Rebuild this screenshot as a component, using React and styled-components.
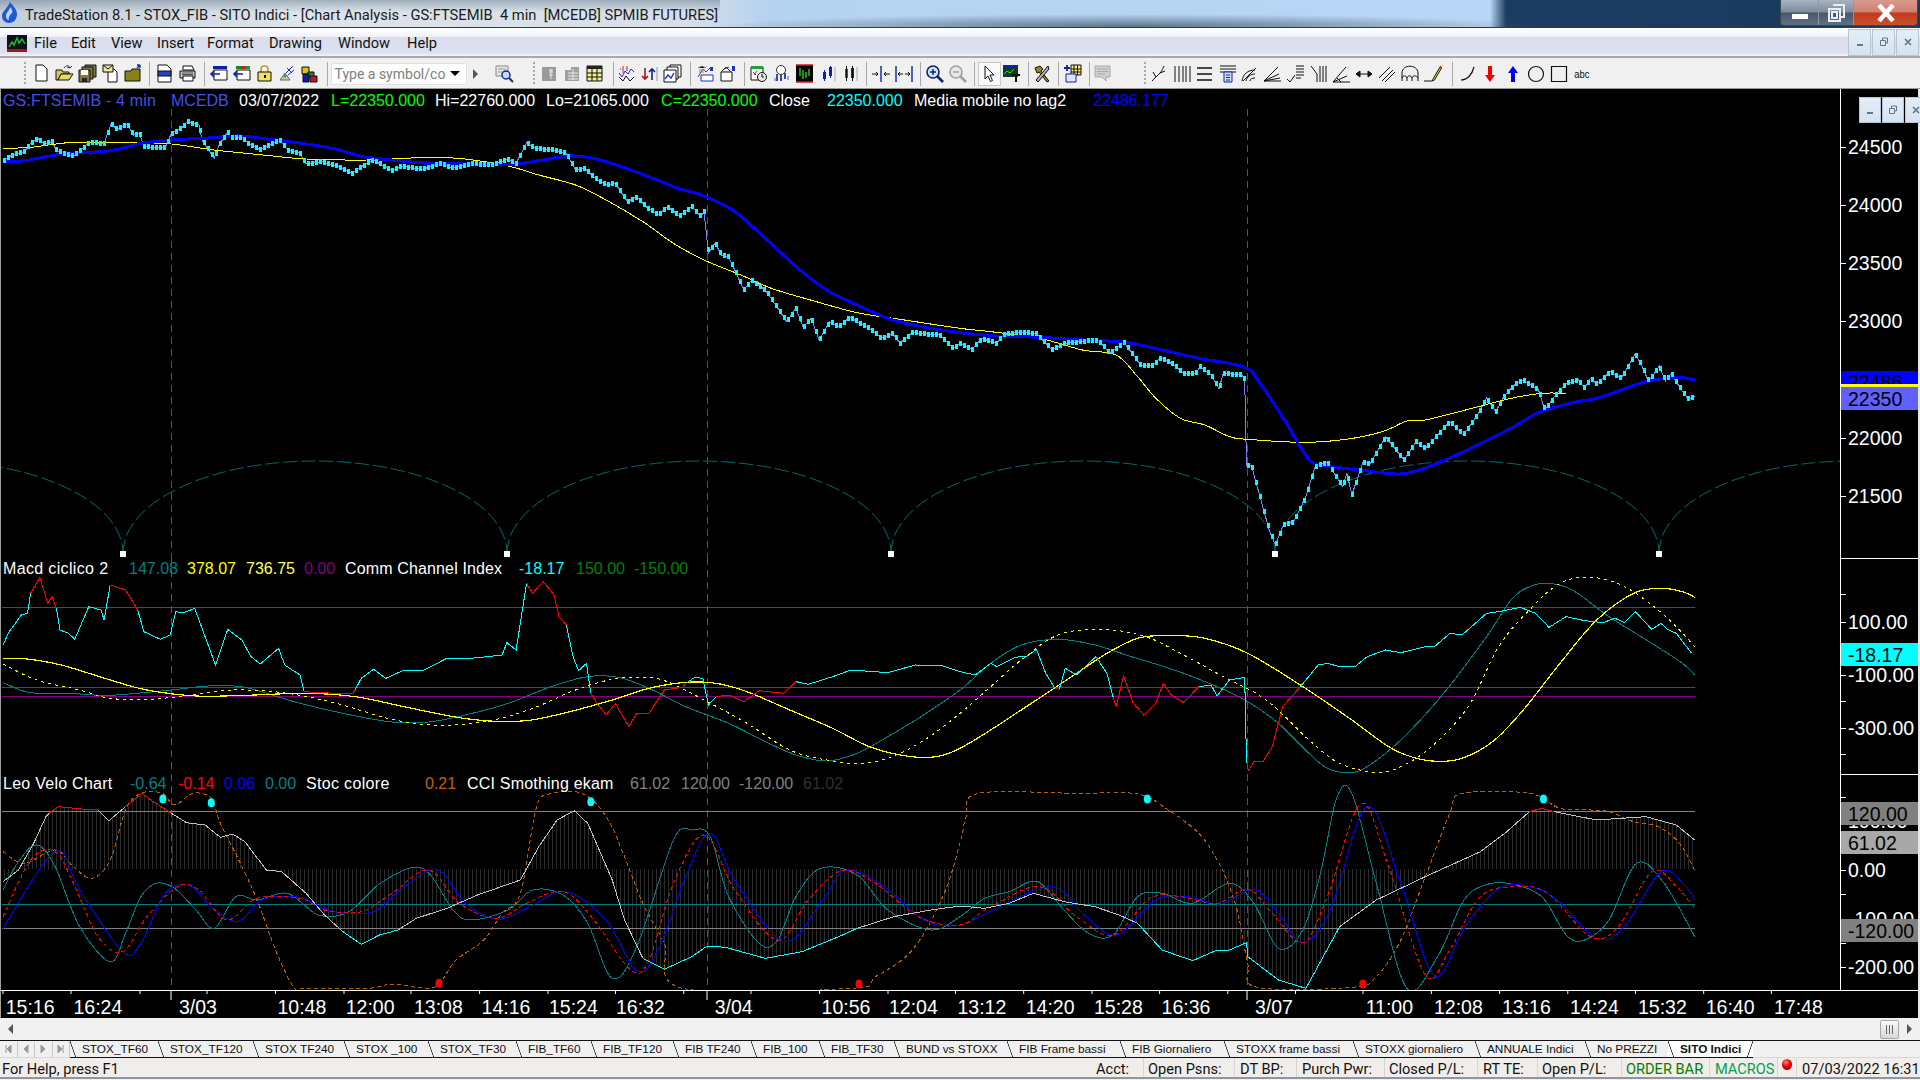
import React from 'react';
import styled, { createGlobalStyle } from 'styled-components';

const GlobalStyle = createGlobalStyle`
  html, body {
    margin: 0;
    padding: 0;
    overflow: hidden;
    background: #000;
  }
`;

const UI_FONT = 'Roboto, "Liberation Sans", sans-serif';
const CHART_FONT = '"Liberation Sans", Arial, sans-serif';

/* ---------- chart data, traced from the screenshot in crop coordinates ---------- */

const STEP_X = 960 / 1568;
const LEFT = 0;
const RIGHT = 960;

const crop = (originX, originY, nums) => {
  const out = [];
  for (let i = 0; i < nums.length; i += 2) {
    out.push([originX + nums[i] * STEP_X, originY + nums[i + 1] / 3]);
  }
  return out;
};
const upper = (side, nums) => crop(side, 90, nums);
const lower = (side, nums) => crop(side, 550, nums);

const priceClose = [
  ...upper(LEFT, [5,212,20,195,40,185,50,160,62,145,72,162,85,155,92,180,105,192,120,198,132,180,145,158,170,160,182,100,190,118,208,102,218,135,228,130,235,170,250,172,270,172,280,130,296,115,306,95,325,105,330,150,350,205,358,165,372,125,380,145,395,140,405,160,425,180,440,165,457,150,470,180,490,190,500,222,525,215,550,228,575,250,590,230,610,210,640,242,655,228,690,238,720,220,740,235,770,220,800,225,830,208,843,220,860,158,875,175,905,180,925,190,940,240,955,235,970,262,990,285,1005,280,1025,335,1040,320,1055,350,1075,375,1090,350,1110,378,1130,350,1145,380,1150,365,1157,490,1168,458,1178,495,1190,500,1205,560,1215,600,1228,570,1250,600,1265,640,1285,695,1300,655,1312,712,1325,685,1338,750,1355,695,1370,710,1388,682,1420,715,1440,745,1458,730,1470,760,1490,728,1535,735,1557,775]),
  ...upper(RIGHT, [0,760,20,778,35,745,60,760,70,735,90,727,125,730,135,750,150,780,170,760,225,750,245,790,268,757,295,825,315,825,328,803,350,825,365,850,385,850,392,830,410,855,423,897,430,850,460,855,465,870,468,1127,476,1127,490,1220,505,1320,515,1365,528,1305,545,1295,565,1220,580,1130,600,1117,625,1190,632,1150,640,1215,658,1117,670,1120,695,1040,725,1110,745,1055,760,1075,800,995,822,1035,845,975,860,925,875,965,890,915,908,880,920,870,945,900,955,960,975,910,990,880,1010,870,1020,895,1030,865,1040,882,1062,845,1080,865,1103,792,1113,825,1125,875,1142,828,1152,873,1162,850,1178,900,1190,928,1200,920]),
];

const priceBlue = [
  ...upper(LEFT, [5,216,40,212,100,193,180,182,230,160,280,150,340,144,390,138,440,148,500,162,550,178,590,199,640,210,700,220,760,222,840,222,880,212,930,198,970,205,1030,240,1080,275,1110,297,1150,318,1200,365,1250,445,1300,530,1350,600,1400,645,1450,685,1500,708]),
  ...upper(RIGHT, [0,728,60,738,130,742,200,750,270,757,330,780,390,805,465,832,490,880,530,990,570,1108,600,1128,660,1142,710,1152,735,1148,780,1120,840,1070,900,1015,945,968,1000,938,1040,925,1080,900,1120,875,1170,862,1200,870]),
];

const priceYellow = [
  ...upper(LEFT, [5,175,50,172,120,157,220,158,280,162,350,180,430,195,500,207,600,210,700,202,760,207,830,228,880,255,940,285,990,330,1050,395,1100,460,1150,510,1210,555,1260,595,1320,628,1400,668,1470,688]),
  ...upper(RIGHT, [0,715,50,725,130,745,200,780,255,795,290,860,320,925,360,985,400,1005,440,1040,470,1048,560,1057,630,1048,690,1025,730,993,760,990,830,958,900,925,950,910,990,910]),
];

const cciSegments = [
  ['#00ffff', lower(LEFT, [5,285,15,245,35,195,45,190,50,130])],
  ['#ff0000', lower(LEFT, [50,130,65,82,78,160,85,140,92,175])],
  ['#00ffff', lower(LEFT, [92,175,98,240,112,250,122,268,145,170,165,180,170,210,180,105])],
  ['#ff0000', lower(LEFT, [180,105,205,120,225,180])],
  ['#00ffff', lower(LEFT, [225,180,235,245,262,268,278,255,287,185,300,188,318,175,335,260,352,345,372,238,395,270,410,320,425,342,455,295,465,345,490,375,497,425])],
  ['#ff0000', lower(LEFT, [497,425,525,428,575,432,580,420])],
  ['#00ffff', lower(LEFT, [580,420,590,385,610,358,630,385,660,360,690,362,730,325,770,325,820,315,828,278,843,300,860,100])],
  ['#ff0000', lower(LEFT, [860,100,870,130,887,95,905,135,913,200,925,225])],
  ['#00ffff', lower(LEFT, [925,225,936,320,945,362,958,340,965,430])],
  ['#ff0000', lower(LEFT, [965,430,975,460,990,495,1005,460,1027,530,1040,490,1060,490,1085,420,1115,412,1120,400])],
  ['#00ffff', lower(LEFT, [1120,400,1135,382,1148,385,1157,465,1170,440])],
  ['#ff0000', lower(LEFT, [1170,440,1190,435,1215,455,1240,422,1280,430,1300,395])],
  ['#00ffff', [...lower(LEFT, [1300,395,1320,403,1360,380,1390,360,1450,368,1495,345,1540,348]), ...lower(RIGHT, [0,365,25,375,50,340,60,350,90,322,110,318,125,298,140,370,155,415])]],
  ['#ff0000', lower(RIGHT, [155,415,162,418])],
  ['#00ffff', lower(RIGHT, [162,418,172,355,190,375,222,320,240,370,250,440])],
  ['#ff0000', lower(RIGHT, [250,440,255,470,267,378,283,460,300,495,320,460,332,400,345,435,365,458,390,410])],
  ['#00ffff', lower(RIGHT, [390,410,410,405,420,438,440,390,465,382,466,470,468,640])],
  ['#ff0000', lower(RIGHT, [470,665,480,635,495,635,510,590,527,470,555,412])],
  ['#00ffff', lower(RIGHT, [555,412,585,345,600,340,620,350,645,350,665,320,695,300,720,308,760,290,775,290,800,250,820,255,860,190,880,185,915,172,940,190,962,232,990,200,1020,212,1050,218,1070,205,1085,218,1103,185,1130,238,1145,220,1155,238,1170,250,1195,310])],
];

const macdTeal = [
  ...lower(LEFT, [5,398,50,428,130,432,180,436,280,420,340,408,400,412,480,455,560,490,640,516,700,516,760,495,830,460,900,410,960,380,1010,382,1060,415,1120,470,1190,520,1250,575,1300,615,1350,633,1400,610,1450,560,1500,505]),
  ...lower(RIGHT, [0,420,50,340,100,285,160,268,220,285,280,320,350,360,420,410,470,455,520,520,570,610,600,655,635,668,665,650,720,570,790,430,860,260,900,150,930,110,960,100,1000,120,1060,200,1130,280,1180,340,1200,375]),
];

const macdYellow = [
  ...lower(LEFT, [5,325,40,326,100,345,180,390,240,420,320,438,400,436,500,430,580,440,660,470,740,500,800,513,860,512,920,490,1000,450,1060,415,1120,397,1170,400,1220,425,1290,480,1360,535,1420,590,1480,618,1530,620]),
  ...lower(RIGHT, [0,595,50,540,100,480,170,395,240,310,290,265,340,256,400,265,470,310,560,410,640,510,700,590,740,622,780,634,820,625,870,575,920,480,980,340,1040,210,1100,130,1145,115,1180,125,1200,142]),
];

const macdDotted = [
  ...lower(LEFT, [5,342,60,390,130,420,180,445,240,448,300,438,360,423,400,420,470,430,550,460,640,508,720,526,800,512,870,475,940,420,1000,388,1050,382,1090,395,1150,450,1220,520,1290,600,1350,630,1400,640,1450,625,1510,570]),
  ...lower(RIGHT, [0,490,50,410,100,330,160,255,230,238,300,258,360,310,430,380,500,450,570,570,620,640,680,667,720,650,770,590,830,470,880,290,930,180,980,100,1030,82,1080,105,1130,165,1170,230,1200,290]),
];

const stocSegments = [
  ['#c0c0c0', lower(LEFT, [5,995,30,960,55,880,75,800,80,790])],
  ['#ff0000', lower(LEFT, [80,790,95,770,140,778,160,780])],
  ['#c0c0c0', lower(LEFT, [160,780,178,812,205,770])],
  ['#ff0000', lower(LEFT, [205,770,232,730,250,755,280,790])],
  ['#c0c0c0', lower(LEFT, [280,790,305,818,335,825,360,862,380,852,400,875,435,960,460,965,500,1030,530,1095,560,1145])],
  ['#00ffff', lower(LEFT, [560,1145,590,1183,620,1155,650,1140])],
  ['#c0c0c0', lower(LEFT, [650,1140,680,1105,730,1075,780,1035,850,990,880,890,910,810,938,782,960,820,1000,990,1020,1110,1050,1225])],
  ['#00ffff', lower(LEFT, [1050,1225,1085,1258,1130,1220,1155,1188,1185,1192,1250,1225,1310,1205,1370,1160,1400,1135])],
  ['#c0c0c0', [...lower(LEFT, [1400,1135,1460,1100,1520,1080]), ...lower(RIGHT, [0,1068,40,1075,80,1060,120,1030,170,1055,220,1070,260,1095,290,1120])]],
  ['#00ffff', lower(RIGHT, [290,1120,330,1200,380,1232,420,1200,440,1200,468,1178,470,1220,520,1290,565,1315,620,1130])],
  ['#c0c0c0', lower(RIGHT, [620,1130,680,1050,760,980,850,905,890,850,930,785])],
  ['#ff0000', lower(RIGHT, [930,785,950,775,970,785])],
  ['#c0c0c0', lower(RIGHT, [970,785,1040,810,1080,805,1120,800,1170,825,1200,870])],
];

const cciOrange = [
  ...lower(LEFT, [5,905,40,940,90,900,120,950,150,985,180,930,205,780,230,730,265,730,285,765,315,730,345,745,360,820,390,930,420,1050,450,1200,480,1312,500,1315,600,1315,640,1303,700,1315,720,1295,745,1230,790,1170,820,1090,850,1030,875,780,895,733,950,730,990,800,1020,920,1050,1060,1085,1180,1115,1315,1390,1315,1430,1280,1490,1200,1540,1040]),
  ...lower(RIGHT, [0,880,10,800,30,730,190,730,290,732,340,780,390,850,420,930,440,1010,455,1100,470,1240,485,1312,640,1312,680,1280,720,1170,760,980,800,790,820,730,930,730,980,775,1030,780,1060,785,1100,815,1140,830,1175,880,1200,960]),
];

const veloTeal = [
  ...lower(LEFT, [5,1020,30,935,60,885,90,950,130,1130,180,1235,205,1150,230,1040,255,1000,285,1015,320,1080,350,1135,385,1040,420,1050,470,1030,520,1095,570,1085,625,995,690,955,740,1080,770,1110,830,1080,870,1020,920,1035,960,1120,1000,1285,1040,1190,1100,870,1130,840,1160,860,1190,1040,1240,1180,1270,1170,1300,1040,1340,955,1400,975,1450,1080,1520,1140]),
  ...lower(RIGHT, [0,1100,40,1045,80,1025,115,995,135,1005,170,1080,210,1150,250,1155,290,1040,330,1030,380,1060,440,1000,480,1060,520,1195,560,1140,590,960,615,745,640,730,680,1000,730,1315,780,1220,820,1060,850,1010,895,1000,950,1040,990,1155,1020,1170,1060,1110,1105,940,1150,1000,1200,1160]),
];

const veloRed = [
  ...lower(LEFT, [5,1100,50,930,90,905,120,1000,160,1160,200,1205,240,1100,290,1010,325,1020,370,1110,420,1045,490,1045,530,1080,590,1085,640,1030,700,960,750,1060,810,1105,860,1060,920,1025,970,1110,1030,1260,1060,1230,1100,1000,1150,855,1200,1020,1270,1170,1320,1050,1375,962,1430,1000,1500,1100]),
  ...lower(RIGHT, [0,1125,50,1070,130,1010,190,1100,250,1155,310,1045,360,1040,420,1060,470,1018,510,1090,560,1178,600,1040,655,762,700,950,760,1275,800,1200,850,1040,910,1010,960,1030,1030,1160,1075,1130,1130,965,1170,1010,1200,1075]),
];

const veloBlue = [
  ...lower(LEFT, [5,1135,90,905,130,1020,200,1205,230,1180,270,1030,310,1008,350,1080,390,1113,430,1048,490,1042,540,1083,610,1085,660,1010,715,960,760,1060,815,1108,870,1065,925,1025,990,1110,1040,1263,1075,1200,1120,980,1160,850,1200,990,1280,1175,1340,1060,1380,962,1440,1005,1510,1110]),
  ...lower(RIGHT, [0,1125,60,1075,150,1010,200,1090,255,1155,320,1050,370,1040,425,1062,480,1018,520,1090,560,1178,605,1080,665,770,720,1000,775,1277,825,1130,880,1015,930,1010,975,1050,1040,1165,1085,1130,1145,965,1185,1010,1200,1050]),
];

const signalDots = [
  ['#00ffff', lower(LEFT, [266,747])[0]],
  ['#00ffff', lower(LEFT, [345,758])[0]],
  ['#00ffff', lower(LEFT, [965,755])[0]],
  ['#00ffff', lower(RIGHT, [306,747])[0]],
  ['#00ffff', lower(RIGHT, [953,747])[0]],
  ['#ff0000', lower(LEFT, [717,1300])[0]],
  ['#ff0000', lower(LEFT, [1403,1302])[0]],
  ['#ff0000', lower(RIGHT, [658,1302])[0]],
];

const DATE_LINES = [171, 707, 1247];
const CYCLE_POINTS = [-261, 123, 507, 891, 1275, 1659];
const CHART_END = 1695;

const sampleAt = (pts, step) => {
  const out = [];
  let seg = 0;
  for (let x = Math.ceil(pts[0][0]); x <= pts[pts.length - 1][0]; x += step) {
    while (seg < pts.length - 2 && pts[seg + 1][0] < x) seg += 1;
    const [x0, y0] = pts[seg];
    const [x1, y1] = pts[seg + 1];
    const t = x1 === x0 ? 0 : Math.min(1, Math.max(0, (x - x0) / (x1 - x0)));
    out.push([x, y0 + (y1 - y0) * t]);
  }
  return out;
};

const smoothPath = (pts) => {
  let d = `M${pts[0][0]} ${pts[0][1]}`;
  for (let i = 0; i < pts.length - 1; i += 1) {
    const p0 = pts[i - 1] || pts[i];
    const p1 = pts[i];
    const p2 = pts[i + 1];
    const p3 = pts[i + 2] || p2;
    const c1 = [p1[0] + (p2[0] - p0[0]) / 6, p1[1] + (p2[1] - p0[1]) / 6];
    const c2 = [p2[0] - (p3[0] - p1[0]) / 6, p2[1] - (p3[1] - p1[1]) / 6];
    d += `C${c1[0]} ${c1[1]} ${c2[0]} ${c2[1]} ${p2[0]} ${p2[1]}`;
  }
  return d;
};

const flatPath = (pts) => pts.map((p, i) => `${i ? 'L' : 'M'}${p[0]} ${p[1]}`).join('');

const Series = ({ pts, color, width = 1, dash, smooth = true }) => (
  <path
    d={smooth ? smoothPath(pts) : flatPath(pts)}
    fill="none"
    stroke={color}
    strokeWidth={width}
    strokeDasharray={dash}
  />
);

/* ---------- page frame ---------- */

const Screen = styled.div`
  width: 1920px;
  height: 1080px;
  display: flex;
  flex-direction: column;
  overflow: hidden;
  background: #f0f0f0;
`;

const TitleBar = styled.div`
  height: 27px;
  flex: none;
  display: flex;
  align-items: flex-start;
  border-bottom: 1px solid #2e3a46;
  background:
    radial-gradient(ellipse 420px 13px at 1130px 100%, rgba(70, 90, 110, 0.8), rgba(70, 90, 110, 0)),
    linear-gradient(180deg, rgba(110, 130, 150, 0.55) 0, rgba(110, 130, 150, 0) 45%) 0 0 / 720px 100% no-repeat,
    linear-gradient(90deg, #c4ced8 0, #dde4ea 300px, #d6dfe7 690px, #b5d2f0 770px, #b8d6f5 1490px, #1d3d60 1506px, #1a3a5c 100%);
`;

const TitleIcon = styled.svg`
  width: 18px;
  height: 22px;
  margin: 2px 0 0 1px;
`;

const TitleText = styled.div`
  margin: 6px 0 0 6px;
  font: 14.7px ${UI_FONT};
  color: #1a1a1a;
  white-space: pre;
`;

const WindowControls = styled.div`
  margin-left: auto;
  margin-right: 2px;
  height: 25px;
  display: flex;
  border: 1px solid #3a4654;
  border-top: none;
  border-radius: 0 0 4px 4px;
  overflow: hidden;
`;

const WindowControl = styled.div`
  width: ${(p) => p.$w}px;
  display: flex;
  align-items: center;
  justify-content: center;
  padding-top: ${(p) => p.$drop || 0}px;
  box-sizing: border-box;
  border-left: ${(p) => (p.$first ? 'none' : '1px solid #8a98a6')};
  background: ${(p) =>
    p.$danger
      ? 'linear-gradient(180deg, #d99a8c 0, #cf8070 48%, #c23a1c 52%, #c9502e 100%)'
      : 'linear-gradient(180deg, #a8b4c0 0, #7d8c9b 48%, #46586a 52%, #5e7082 100%)'};
`;

const MenuBar = styled.div`
  height: 30px;
  flex: none;
  display: flex;
  align-items: center;
  box-sizing: border-box;
  border-bottom: 2px solid #a9a9ad;
  background: linear-gradient(180deg, #fff 0, #f1f3f8 30%, #d9ddec 34%, #dde0ee 88%, #f2f3f8 100%);
`;

const MenuLogo = styled.svg`
  width: 20px;
  height: 17px;
  margin: 2px 7px 0 7px;
`;

const MenuItem = styled.span`
  width: ${(p) => p.$w}px;
  padding-top: 2px;
  font: 14.6px ${UI_FONT};
  color: #111;
`;

const MdiButtons = styled.div`
  margin-left: auto;
  margin-right: 1px;
  height: 27px;
  display: flex;
  gap: 1px;
`;

const MdiButton = styled.div`
  width: 23px;
  display: flex;
  align-items: center;
  justify-content: center;
  box-sizing: border-box;
  border: 1px solid #b4c6d6;
  background: linear-gradient(180deg, #e4eef6, #d6e2ee);
`;

/* ---------- toolbar ---------- */

const ToolBar = styled.div`
  height: 31px;
  flex: none;
  display: flex;
  align-items: center;
  box-sizing: border-box;
  padding: 1px 0 0 24px;
  border-bottom: 1px solid #9a9a9a;
  background: #f0f0f0;
`;

const Grip = styled.div`
  width: 2px;
  height: 24px;
  margin-left: ${(p) => p.$l || 0}px;
  margin-right: ${(p) => p.$r || 0}px;
  background: repeating-linear-gradient(180deg, #a8a8a8 0 2px, transparent 2px 4px);
`;

const Separator = styled.div`
  width: 1px;
  height: 24px;
  margin-left: ${(p) => p.$l ?? 4}px;
  margin-right: ${(p) => p.$r ?? 3}px;
  background: #a8a8a8;
`;

const Spacer = styled.div`
  width: ${(p) => p.$w}px;
  flex: none;
`;

const ToolButton = styled.div`
  width: ${(p) => p.$w || 22.8}px;
  height: 24px;
  flex: none;
  display: flex;
  align-items: center;
  justify-content: center;
  box-sizing: border-box;
  ${(p) => p.$pressed && 'background: #fafafa; border: 1px solid #c8c8c8;'}
  svg {
    width: 20px;
    height: 20px;
    display: block;
  }
`;

const ToolText = styled.span`
  font: 11px "Liberation Sans Narrow", "Liberation Sans", sans-serif;
  color: #111;
  transform: scaleX(0.85);
`;

const SymbolBox = styled.div`
  width: 136px;
  height: 22px;
  flex: none;
  margin-left: 3px;
  display: flex;
  align-items: center;
  justify-content: space-between;
  box-sizing: border-box;
  padding: 0 6px 0 3px;
  background: #fff;
  border: 1px solid #e0e0e0;
  border-radius: 2px;
  font: 14px ${UI_FONT};
  color: #808080;
`;

const DropArrow = styled.span`
  width: 0;
  height: 0;
  border-left: 5px solid transparent;
  border-right: 5px solid transparent;
  border-top: 5px solid #000;
`;

const K = '#111';
const icons = {
  page: <path d="M4 1h7l4 4v12H4z" fill="#fff" stroke={K} />,
  open: <><path d="M1 16V6h6l1 2h6v2H6L3 16z" fill="#d8c850" stroke={K} /><path d="M3 16l3-6h12l-4 6z" fill="#e8d870" stroke={K} /><path d="M9 4c2-3 5-3 6 0m0 0l2-2m-2 2l-3-1" fill="none" stroke="#333" /></>,
  saveAll: <><path d="M7 1h11v12H7z" fill="#807840" stroke={K} /><path d="M4 3h11v12H4z" fill="#807840" stroke={K} /><path d="M1 6h11v12H1z" fill="#807840" stroke={K} /><path d="M3 6h7v5H3z" fill="#fff" /><path d="M4 14h5v4H4z" fill="#222" /></>,
  mail: <><path d="M7 5h6l3 3v10H7z" fill="#fff" stroke={K} /><path d="M2 1h10v7H2z" fill="#f0e8a0" stroke={K} /><path d="M2 1l5 4 5-4" fill="none" stroke={K} /></>,
  folderUp: <><path d="M1 7h6l1-2h8v12H1z" fill="#8a8018" stroke={K} /><path d="M13 4l3-3m0 0h-3m3 0v3" fill="none" stroke="#1030a0" strokeWidth="1.4" /></>,
  preview: <><path d="M3 1h9l4 4v13H3z" fill="#fff" stroke={K} /><path d="M3 7h13v5H3z" fill="#2a40c0" /><path d="M3 7h13v5H3z" fill="none" stroke={K} /></>,
  print: <><path d="M5 2h9l2 4H5z" fill="#fff" stroke={K} /><path d="M2 7h15v7H2z" fill="#c8c8c8" stroke={K} /><path d="M5 12h10v5H5z" fill="#fff" stroke={K} /><path d="M4 9h11M4 10.5h11" stroke="#555" /></>,
  windowIn: <><path d="M4 2h14v3H4z" fill="#1020a0" /><path d="M5 6h13v10H5z" fill="#fff" stroke={K} /><path d="M11 10H2m3-3L2 10l3 3" fill="none" stroke="#1020a0" strokeWidth="1.5" /></>,
  windowColor: <><path d="M4 2h5v3H4z" fill="#1a8a1a" /><path d="M9 2h5v3H9z" fill="#d02020" /><path d="M14 2h4v3h-4z" fill="#20a020" /><path d="M5 6h13v10H5z" fill="#fff" stroke={K} /><path d="M11 10H2m3-3L2 10l3 3" fill="none" stroke="#1020a0" strokeWidth="1.5" /></>,
  lock: <><path d="M6 8V5c0-4 7-4 7 0v3" fill="none" stroke="#b0a020" strokeWidth="1.6" /><path d="M3 8h13v9H3z" fill="#f0e060" stroke={K} /><path d="M9 11h2v3H9z" fill={K} /></>,
  dish: <><path d="M3 16l5-7 5 7z" fill="#c8c8c8" stroke="#666" /><path d="M9 9l7-7m-5 9l6-5M10 4l5 5" stroke="#2030c0" /><circle cx="8" cy="12" r="1.6" fill="#40a040" /></>,
  cubes: <><path d="M2 3h7v7H2z" fill="#d8c020" stroke={K} /><path d="M8 8h6v6H8z" fill="#1a8a30" stroke={K} /><path d="M3 10h6v8H3z" fill="#1020a0" stroke={K} /><path d="M10 12h7v6h-7z" fill="#c01820" stroke={K} /></>,
  lensPage: <><path d="M2 2h12v10H2z" fill="#e8e8e8" stroke="#888" /><path d="M4 5h8M4 8h8" stroke="#999" /><circle cx="12" cy="11" r="4" fill="#bfe0ff" stroke="#1020a0" strokeWidth="1.4" /><path d="M15 14l4 4" stroke="#333" strokeWidth="2.2" /></>,
  grayData: <><path d="M2 3h14v14H2z" fill="#9a9a9a" /><path d="M11 5v10M13 6H9m0 2h4m-4 3h4" stroke="#e8e8e8" /></>,
  grayGrid: <><path d="M2 6h6V3h8v14H2z" fill="#a0a0a0" /><path d="M5 9h10M5 12h10M5 15h10M10 5v11" stroke="#e8e8e8" /></>,
  table: <><path d="M2 2h15v15H2z" fill="#f4ec98" stroke={K} /><path d="M2 2h15v3H2z" fill="#222" /><path d="M7 5v12M12 5v12M2 9h15M2 13h15" stroke={K} /></>,
  bars: <><path d="M3 5h1M2 9l3 4 3-6 3 3 3-5 3 3" fill="none" stroke="#2030c0" /><path d="M2 13l4 4 3-5 4 5 4-4" fill="none" stroke={K} /><path d="M6 2v7M10 2v5" stroke="#c02020" /></>,
  updown: <><path d="M5 4v11m-3-3l3 3 3-3" fill="none" stroke="#a01818" strokeWidth="1.6" /><path d="M12 16V5m-3 3l3-3 3 3" fill="none" stroke="#1020a0" strokeWidth="1.6" /><path d="M17 3v14" stroke="#999" /></>,
  stacked: <><path d="M7 1h11v12H7z" fill="#fff" stroke={K} /><path d="M4 3h11v12H4z" fill="#fff" stroke={K} /><path d="M1 6h12v12H1z" fill="#fff" stroke={K} /><path d="M2 15l3-4 3 3 3-5" fill="none" stroke="#2030c0" strokeWidth="1.4" /></>,
  chartIn: <><path d="M2 13L7 5l3 3 4-4" fill="none" stroke="#444" /><path d="M2 4l4-2 4 2M3 6h6M3 8h5" stroke="#888" /><path d="M5 11h12v6H5z" fill="#fff" stroke="#2030c0" /><path d="M14 3h3v4h-3z" fill="#2030c0" /></>,
  chartOut: <><path d="M3 8h11v9H3z" fill="#fff" stroke={K} /><path d="M3 8l5-5 5 5M6 5l5-2" fill="none" stroke="#333" /><path d="M14 2h3v5h-3z" fill="#2030c0" /></>,
  calendar: <><path d="M2 3h12v13H2z" fill="#fff" stroke={K} /><path d="M2 2h12v3H2z" fill="#20a040" /><path d="M4 8l3 3M8 7l-3 4" stroke="#c02020" /><circle cx="13" cy="13" r="4.5" fill="#e8e8e8" stroke={K} /><path d="M13 10v3h2" fill="none" stroke={K} /></>,
  lensBars: <><circle cx="9" cy="6" r="4.5" fill="#fff" stroke="#333" /><path d="M5 10v7M9 11v6M13 9v6" stroke="#1020a0" strokeWidth="1.6" /><path d="M3 14v3M16 12v4" stroke="#666" /></>,
  blackBars: <><path d="M1 1h17v17H1z" fill="#000" /><path d="M1 1h17M1 18h17" stroke="#d81818" strokeWidth="1.4" /><path d="M5 4v8M8 6v9M11 8v6M14 5v7" stroke="#20d020" strokeWidth="1.4" /></>,
  candleBlue: <><path d="M5 8h3v7H5zM11 3h3v9h-3z" fill="#1020a0" /><path d="M6.5 6v11M12.5 2v12" stroke="#1020a0" /><path d="M17 3v14" stroke="#aaa" /></>,
  candleMix: <><path d="M5 5h3v9H5z" fill="#c02020" /><path d="M11 4h3v10h-3z" fill="#1020a0" /><path d="M6.5 2v15M12.5 2v15" stroke={K} /><path d="M17 3v14" stroke="#aaa" /></>,
  squeeze: <><path d="M10 2v16" stroke="#1020a0" strokeWidth="1.4" /><path d="M1 10h6m-2-2l2 2-2 2M19 10h-6m2-2l-2 2 2 2" fill="none" stroke={K} /></>,
  spread: <><path d="M2 2v16M18 2v16" stroke="#1020a0" strokeWidth="1.4" /><path d="M9 10H4m2-2l-2 2 2 2M11 10h5m-2-2l2 2-2 2" fill="none" stroke={K} /></>,
  zoomIn: <><circle cx="8" cy="8" r="6" fill="#cfe4ff" stroke="#10206a" strokeWidth="1.6" /><path d="M5 8h6M8 5v6" stroke="#10206a" strokeWidth="1.4" /><path d="M12 12l6 6" stroke="#10206a" strokeWidth="2.6" /></>,
  zoomOut: <><circle cx="8" cy="8" r="6" fill="#e8e8e8" stroke="#a0a0a0" strokeWidth="1.6" /><path d="M5 8h6" stroke="#a0a0a0" strokeWidth="1.4" /><path d="M12 12l6 6" stroke="#a0a0a0" strokeWidth="2.6" /></>,
  pointer: <path d="M6 2v13l3-3 2.5 5.5 2-1L11 11h4z" fill="#fff" stroke={K} />,
  chartText: <><path d="M1 1h15v12H1z" fill="#103a20" /><path d="M1 1h15v3H1z" fill="#1020c0" /><path d="M2 10l3-3 3 2 4-4" fill="none" stroke="#30e030" /><path d="M10 10h8v2h-3v6h-2v-6h-3z" fill={K} /></>,
  hammer: <><path d="M3 4l5-2 3 3-2 2 8 10-2 1-8-10-2 1z" fill="#a08020" stroke={K} /><path d="M16 2l-12 14 2 2L17 5z" fill="#b0b0b0" stroke={K} /></>,
  addTable: <><path d="M8 1h10v10H8z" fill="#f4ec80" stroke={K} /><path d="M11 1v10M14.5 1v10M8 5h10M8 8h10" stroke={K} /><path d="M3 10h10v8H3z" fill="#dfe6f6" stroke="#1020a0" /><path d="M1 4h6M4 1v6" stroke="#1020a0" strokeWidth="1.8" /></>,
  note: <><path d="M2 2h15v11h-4v4l-4-4H2z" fill="#d0d0d0" stroke="#a8a8a8" /><path d="M4 5h11M4 7.5h11M4 10h8" stroke="#a8a8a8" /></>,
  fork: <path d="M3 17l8-8m0 0c2-2 3-5 4-7M11 9l5-2M7 13l-3-5" fill="none" stroke={K} />,
  vLines: <path d="M3 2v16M7 2v16M11 2v16M14 2v16M18 2v16" stroke={K} />,
  hLines: <path d="M2 4h15M2 10h15M2 16h15" stroke={K} strokeWidth="1.4" />,
  calc: <><path d="M2 2h16M2 5h16M2 8h16" stroke={K} /><path d="M6 8h8v10H6z" fill="#cfe0ff" stroke="#1020a0" /><path d="M8 11h4M8 13.5h4M8 16h4" stroke="#1020a0" /></>,
  arc: <><path d="M2 17c1-7 6-11 13-11M6 17c1-4 4-7 9-7M10 17c0-2 2-3 5-3" fill="none" stroke={K} /><path d="M3 17L16 4" stroke={K} /></>,
  fan: <><path d="M1 17h17M1 17L15 3M1 17l15-7M1 17l16-3" fill="none" stroke={K} /></>,
  retrace: <><path d="M1 15l3 3 5-7" fill="none" stroke={K} /><path d="M10 2h8M10 5h8M10 8h8M10 11h8M10 14h5" stroke={K} /></>,
  speedV: <path d="M2 2l6 8v8M11 2v16M14 2v16M17 2v16" fill="none" stroke={K} />,
  angle: <path d="M1 18h17M1 18L14 3M5 14l4 4M1 18l14-6" fill="none" stroke={K} />,
  arrows: <path d="M2 10h16M2 10l4-3v6zM18 10l-4-3v6z" fill={K} stroke={K} />,
  parallels: <path d="M2 14L13 3M5 17L16 6M8 18L18 8" stroke={K} />,
  arch: <path d="M2 17V9c0-9 16-9 16 0v8M2 14c1-3 4-3 5 0 1-3 4-3 5 0 1-3 4-3 6 0M7 14v3M12 14v3" fill="none" stroke={K} />,
  pencil: <><path d="M1 17h8" stroke={K} /><path d="M10 15l7-12 1.5 1-7 12-2 1z" fill="#f0e020" stroke={K} /><path d="M16.5 3l1-1 1.5 1-.5 1.5z" fill="#c01818" /></>,
  curve: <path d="M3 16c6 0 11-5 13-13" fill="none" stroke={K} strokeWidth="1.2" />,
  arrowDown: <path d="M8 2h4v9h3l-5 7-5-7h3z" fill="#f00000" />,
  arrowUp: <path d="M8 18h4V9h3l-5-7-5 7h3z" fill="#0000f0" />,
  circle: <circle cx="10" cy="10" r="7.5" fill="none" stroke={K} strokeWidth="1.2" />,
  square: <path d="M2.5 2.5h15v15h-15z" fill="none" stroke={K} strokeWidth="1.2" />,
};

const Tool = ({ name, pressed }) => (
  <ToolButton $pressed={pressed}>
    <svg viewBox="0 0 20 20">{icons[name]}</svg>
  </ToolButton>
);

const Tools = ({ names }) => names.map((n) => <Tool key={n} name={n} pressed={n === 'pointer'} />);

/* ---------- chart panes ---------- */

const ChartArea = styled.div`
  height: 929px;
  flex: none;
  display: flex;
  flex-direction: column;
  box-sizing: border-box;
  position: relative;
  border-left: 1px solid #a0a0a0;
  border-right: 2px solid #e8e8e8;
  background: #000;
`;

const Pane = styled.div`
  height: ${(p) => p.$h}px;
  flex: none;
  display: flex;
`;

const Plot = styled.div`
  width: 1839px;
  flex: none;
  position: relative;
  svg {
    display: block;
  }
`;

const Legend = styled.div`
  position: absolute;
  top: ${(p) => p.$top || 0}px;
  left: 2px;
  display: flex;
  height: ${(p) => p.$h}px;
  align-items: center;
  font: 16px ${CHART_FONT};
  white-space: pre;
`;

const LegendItem = styled.span`
  flex: none;
  width: ${(p) => (p.$w ? `${p.$w}px` : 'auto')};
  color: ${(p) => p.$c || '#fff'};
  letter-spacing: ${(p) => p.$ls || 0}px;
`;

const Axis = styled.svg`
  width: 78px;
  flex: none;
  display: block;
  font: 19.5px ${CHART_FONT};
`;

const TimeScale = styled.svg`
  width: 1917px;
  height: 28px;
  flex: none;
  display: block;
  font: 19.5px ${CHART_FONT};
`;

const FloatingControls = styled.div`
  position: absolute;
  top: 8px;
  right: -9px;
  height: 26px;
  display: flex;
  gap: 1px;
`;

const FloatingButton = styled(MdiButton)`
  width: 22px;
`;

const Hbar = () => (
  <svg width="10" height="10" viewBox="0 0 10 10">
    <path d="M2 8h6" stroke="#5a7890" strokeWidth="2" />
  </svg>
);
const RestoreGlyph = () => (
  <svg width="10" height="10" viewBox="0 0 10 10">
    <path d="M3.5 3V1h5v5H6.5M1.5 3.5h5v5h-5z" fill="none" stroke="#5a7890" />
  </svg>
);
const CrossGlyph = () => (
  <svg width="10" height="10" viewBox="0 0 10 10">
    <path d="M2 2l6 6M8 2l-6 6" stroke="#5a7890" strokeWidth="1.6" />
  </svg>
);

const PlotSvg = ({ top, height, children }) => (
  <svg width="1839" height={height} viewBox={`1 ${top} 1839 ${height}`} shapeRendering="crispEdges">
    {DATE_LINES.map((x) => (
      <line key={x} x1={x} x2={x} y1={top < 100 ? 109 : top} y2={top + height} stroke="#555" strokeDasharray="7 5" />
    ))}
    {children}
  </svg>
);

const AxisScale = ({ top, height, ticks, minor = [], labels = [], boxes = [], overlays = [] }) => (
  <Axis viewBox={`1840 ${top} 78 ${height}`} height={height}>
    <line x1="1840.5" x2="1840.5" y1={top} y2={top + height} stroke="#fff" />
    {top > 100 && <line x1="1840" x2="1918" y1={top + 0.5} y2={top + 0.5} stroke="#fff" />}
    {[...ticks, ...minor].map((y) => (
      <line key={y} x1="1841" x2="1846" y1={y + 0.5} y2={y + 0.5} stroke="#fff" />
    ))}
    {labels.map(([text, y]) => (
      <text key={text} x="1848" y={y + 7} fill="#fff">{text}</text>
    ))}
    {boxes.map(([text, y, h, bg, color, textY]) => (
      <g key={text}>
        <rect x="1841" y={y} width="77" height={h} fill={bg} />
        <text x="1848" y={textY} fill={color}>{text}</text>
      </g>
    ))}
    {overlays}
  </Axis>
);

const TIME_TICKS = [3, 71, 140, 207, 275.5, 344, 411, 479.6, 548, 615.5, 683.7, 751, 819.6, 888, 955.5, 1023.7, 1092, 1159.6, 1227.8, 1295.5, 1363, 1431.4, 1499.6, 1567.8, 1635.5, 1703.7, 1771.4];

const TIME_LABELS = [
  ['15:16', 5.7], ['16:24', 73.5], ['3/03', 179], ['10:48', 277.5], ['12:00', 345.7], ['13:08', 414],
  ['14:16', 481.6], ['15:24', 549], ['16:32', 616], ['3/04', 714.7], ['10:56', 821.6], ['12:04', 889],
  ['13:12', 957.5], ['14:20', 1025.7], ['15:28', 1094], ['16:36', 1161.6], ['3/07', 1255], ['11:00', 1365.7],
  ['12:08', 1434], ['13:16', 1502], ['14:24', 1570], ['15:32', 1638], ['16:40', 1705.7], ['17:48', 1774],
];

const PriceChart = () => (
  <Pane $h={469}>
    <Plot>
      <PlotSvg top={89} height={469}>
        {CYCLE_POINTS.map((x) => (
          <path key={x} d={`M${x} 553A192 92 0 0 1 ${x + 384} 553`} fill="none" stroke="#006a6a" strokeDasharray="14 4" shapeRendering="auto" />
        ))}
        <Series pts={priceClose} color="#8080ff" smooth={false} />
        <Series pts={priceYellow} color="#ffff00" />
        <Series pts={priceBlue} color="#0000ff" width={3} />
        {sampleAt(priceClose, 4).map(([x, y]) => (
          <rect key={x} x={x - 1} y={y - 2.5} width="3" height="5" fill="#00ffff" />
        ))}
        {CYCLE_POINTS.slice(1).map((x) => (
          <rect key={x} x={x - 3} y="551" width="6" height="6" fill="#fff" />
        ))}
      </PlotSvg>
      <Legend $h={22} $top={1}>
        <LegendItem $w={168} $c="#4450e8" $ls={0.15}>GS:FTSEMIB - 4 min</LegendItem>
        <LegendItem $w={68} $c="#4450e8">MCEDB</LegendItem>
        <LegendItem $w={92}>03/07/2022</LegendItem>
        <LegendItem $w={104} $c="#00ff00">L=22350.000</LegendItem>
        <LegendItem $w={111}>Hi=22760.000</LegendItem>
        <LegendItem $w={115}>Lo=21065.000</LegendItem>
        <LegendItem $w={108} $c="#00ff00">C=22350.000</LegendItem>
        <LegendItem $w={58}>Close</LegendItem>
        <LegendItem $w={87} $c="#00ffff">22350.000</LegendItem>
        <LegendItem $w={179}>Media mobile no lag2</LegendItem>
        <LegendItem $c="#0000ff">22486.177</LegendItem>
      </Legend>
    </Plot>
    <AxisScale
      top={89}
      height={469}
      ticks={[147, 205, 263, 321, 438, 496]}
      labels={[['24500', 147], ['24000', 205], ['23500', 263], ['23000', 321], ['22000', 438], ['21500', 496]]}
      boxes={[
        ['22486', 371, 13, '#0000ff', '#000', 389],
        ['22350', 387, 23, '#6060ff', '#000', 406],
      ]}
      overlays={<rect x="1841" y="384" width="77" height="3" fill="#ffff00" />}
    />
  </Pane>
);

const MacdChart = () => (
  <Pane $h={216}>
    <Plot>
      <PlotSvg top={558} height={216}>
        <line x1="2" x2={CHART_END} y1="607.5" y2="607.5" stroke="#008000" />
        <line x1="2" x2={CHART_END} y1="687.5" y2="687.5" stroke="#008000" />
        <line x1="2" x2={CHART_END} y1="696.5" y2="696.5" stroke="#800080" />
        <Series pts={macdTeal} color="#008080" />
        <Series pts={macdDotted} color="#ffff00" dash="3 4" />
        <Series pts={macdYellow} color="#ffff00" width={1.2} />
        {cciSegments.map(([color, pts], i) => (
          <Series key={i} pts={pts} color={color} smooth={false} />
        ))}
      </PlotSvg>
      <Legend $h={20} $top={1}>
        <LegendItem $w={126} $ls={0.35}>Macd ciclico 2</LegendItem>
        <LegendItem $w={58} $c="#008080">147.08</LegendItem>
        <LegendItem $w={59} $c="#ffff00">378.07</LegendItem>
        <LegendItem $w={58} $c="#ffff66">736.75</LegendItem>
        <LegendItem $w={41} $c="#800080">0.00</LegendItem>
        <LegendItem $w={174} $ls={0.14}>Comm Channel Index</LegendItem>
        <LegendItem $w={57} $c="#00ffff">-18.17</LegendItem>
        <LegendItem $w={58} $c="#008000">150.00</LegendItem>
        <LegendItem $c="#008000">-150.00</LegendItem>
      </Legend>
    </Plot>
    <AxisScale
      top={558}
      height={216}
      ticks={[622, 675, 728]}
      minor={[594, 701, 754]}
      labels={[['100.00', 622], ['-100.00', 675], ['-300.00', 728]]}
      boxes={[['-18.17', 643, 23, '#00ffff', '#000', 662]]}
    />
  </Pane>
);

const stocPoints = stocSegments.flatMap(([, pts]) => pts);

const VeloChart = () => (
  <Pane $h={216}>
    <Plot>
      <PlotSvg top={774} height={216}>
        {sampleAt(stocPoints, 4).map(([x, y]) => (
          <line key={x} x1={x} x2={x} y1="869" y2={y} stroke="#2c2c2c" />
        ))}
        <line x1="2" x2={CHART_END} y1="811.5" y2="811.5" stroke="#808080" />
        <line x1="2" x2={CHART_END} y1="904.5" y2="904.5" stroke="#008080" />
        <line x1="2" x2={CHART_END} y1="928.5" y2="928.5" stroke="#808080" />
        <Series pts={cciOrange} color="#c06000" dash="4 3" />
        <Series pts={veloTeal} color="#008080" />
        <Series pts={veloBlue} color="#0000ff" />
        <Series pts={veloRed} color="#ff0000" dash="4 3" />
        {stocSegments.map(([color, pts], i) => (
          <Series key={i} pts={pts} color={color} smooth={false} />
        ))}
        {signalDots.map(([color, [x, y]]) => (
          <ellipse key={x} cx={x} cy={y} rx="3.5" ry="4.5" fill={color} shapeRendering="auto" />
        ))}
      </PlotSvg>
      <Legend $h={20}>
        <LegendItem $w={127} $ls={0.26}>Leo Velo Chart</LegendItem>
        <LegendItem $w={48} $c="#008080">-0.64</LegendItem>
        <LegendItem $w={46} $c="#ff0000">-0.14</LegendItem>
        <LegendItem $w={41} $c="#0000ff">0.06</LegendItem>
        <LegendItem $w={41} $c="#008080">0.00</LegendItem>
        <LegendItem $w={119} $ls={0.33}>Stoc colore</LegendItem>
        <LegendItem $w={42} $c="#c06000">0.21</LegendItem>
        <LegendItem $w={163} $ls={0.2}>CCI Smothing ekam</LegendItem>
        <LegendItem $w={51} $c="#808080">61.02</LegendItem>
        <LegendItem $w={58} $c="#808080">120.00</LegendItem>
        <LegendItem $w={64} $c="#808080">-120.00</LegendItem>
        <LegendItem $c="#303030">61.02</LegendItem>
      </Legend>
    </Plot>
    <AxisScale
      top={774}
      height={216}
      ticks={[870, 967]}
      minor={[797, 894, 943]}
      labels={[['100.00', 821], ['0.00', 870], ['-100.00', 919], ['-200.00', 967]]}
      boxes={[
        ['120.00', 802, 23, '#808080', '#000', 821],
        ['61.02', 831, 23, '#a8a8a8', '#000', 850],
        ['-120.00', 919, 23, '#808080', '#000', 938],
      ]}
    />
  </Pane>
);

const TimeAxis = () => (
  <TimeScale viewBox="1 990 1917 28">
    <line x1="1" x2="1918" y1="990.5" y2="990.5" stroke="#fff" />
    {TIME_TICKS.map((x) => (
      <line key={x} x1={x} x2={x} y1="990" y2="994" stroke="#fff" />
    ))}
    {DATE_LINES.map((x) => (
      <line key={x} x1={x} x2={x} y1="990" y2="1000" stroke="#fff" />
    ))}
    {TIME_LABELS.map(([text, x]) => (
      <text key={text} x={x} y="1014" fill="#fff">{text}</text>
    ))}
  </TimeScale>
);

/* ---------- bottom strip ---------- */

const ScrollBar = styled.div`
  height: 22px;
  flex: none;
  display: flex;
  align-items: center;
  justify-content: space-between;
  background: #f0f0f0;
  padding: 0 8px;
`;

const ScrollArrow = styled.span`
  width: 0;
  height: 0;
  border-top: 5px solid transparent;
  border-bottom: 5px solid transparent;
  ${(p) => (p.$right ? 'border-left: 5px solid #555;' : 'border-right: 5px solid #555;')}
`;

const ScrollEnd = styled.div`
  display: flex;
  align-items: center;
  gap: 8px;
`;

const ScrollThumb = styled.div`
  width: 19px;
  height: 19px;
  box-sizing: border-box;
  display: flex;
  align-items: center;
  justify-content: center;
  gap: 2px;
  border: 1px solid #a8a8a8;
  border-radius: 2px;
  background: linear-gradient(180deg, #fafafa, #d8d8d8);
  i {
    width: 1px;
    height: 9px;
    background: #666;
  }
`;

const TabStrip = styled.div`
  height: 18px;
  flex: none;
  display: flex;
  box-sizing: border-box;
  border-top: 1px solid #111;
  border-bottom: 1px solid #d8d8d8;
  background: #f0f0f0;
`;

const TabNav = styled.div`
  width: 70px;
  flex: none;
  display: flex;
`;

const TabNavButton = styled.div`
  flex: 1;
  display: flex;
  align-items: center;
  justify-content: center;
  border-right: 1px solid #c8c8c8;
  svg {
    width: 10px;
    height: 10px;
  }
`;

const Tab = styled.div`
  width: ${(p) => p.$w}px;
  flex: none;
  position: relative;
  box-sizing: border-box;
  padding-left: 12px;
  height: 17px;
  border-bottom: 1px solid #111;
  background: ${(p) => (p.$active ? '#fff' : 'transparent')};
  font: ${(p) => (p.$active ? 'bold' : 'normal')} 11.8px/16px "Liberation Sans", sans-serif;
  color: #111;
  white-space: pre;
  &::before,
  &::after {
    content: '';
    position: absolute;
    top: 0;
    bottom: -1px;
    width: 6px;
  }
  &::before {
    left: 0;
    background: linear-gradient(to top right, transparent calc(50% - 0.7px), #111 50%, transparent calc(50% + 0.7px));
  }
  &:last-child::after {
    right: 0;
    background: linear-gradient(to top left, transparent calc(50% - 0.7px), #111 50%, transparent calc(50% + 0.7px));
  }
`;

const StatusBar = styled.div`
  height: 19px;
  flex: none;
  display: flex;
  align-items: center;
  background: #f1edeb;
  font: 14.6px ${UI_FONT};
  color: #111;
  border-bottom: 2px solid #8c97a3;
`;

const HelpText = styled.div`
  flex: 1;
  padding: 2px 0 0 2px;
`;

const StatusCell = styled.div`
  width: ${(p) => p.$w}px;
  height: 100%;
  flex: none;
  box-sizing: border-box;
  display: flex;
  align-items: center;
  white-space: pre;
  padding: 2px 0 0 ${(p) => p.$pad ?? 4}px;
  border-left: ${(p) => (p.$bare ? 'none' : '1px solid #d8d4d2')};
  color: ${(p) => p.$c || '#111'};
`;

const Led = styled.span`
  width: 10px;
  height: 11px;
  margin-top: -8px;
  border-radius: 50%;
  background: radial-gradient(circle at 40% 30%, #ff8080 0, #e00000 45%, #800000 100%);
`;

const TABS = [
  ['STOX_TF60', 88], ['STOX_TF120', 95], ['STOX TF240', 91], ['STOX _100', 84], ['STOX_TF30', 88], ['FIB_TF60', 75],
  ['FIB_TF120', 82], ['FIB TF240', 78], ['FIB_100', 68], ['FIB_TF30', 75], ['BUND vs STOXX', 113], ['FIB Frame bassi', 113],
  ['FIB Giornaliero', 104], ['STOXX frame bassi', 129], ['STOXX giornaliero', 122], ['ANNUALE Indici', 110], ['No PREZZI', 83],
  ['SITO Indici', 85, true],
];

const STATUS = [
  ['Acct:', 51, 4, undefined, true], ['Open Psns:', 91, 4], ['DT BP:', 62, 5], ['Purch Pwr:', 88, 5], ['Closed P/L:', 93, 4],
  ['RT TE:', 60, 5], ['Open P/L:', 84, 4], ['ORDER BAR', 88, 4, '#008000'], ['MACROS', 68, 5, '#00a050'],
];

const NAV_GLYPHS = ['M3 1v8M8 1L4 5l4 4z', 'M7 1L3 5l4 4z', 'M3 1l4 4-4 4z', 'M7 1v8M2 1l4 4-4 4z'];

export default function App() {
  return (
    <>
      <GlobalStyle />
      <Screen>
        <TitleBar>
          <TitleIcon viewBox="0 0 18 22">
            <path d="M9 0c3 4 7 7 7 12 0 5-3 9-8 9-4 0-7-3-7-7C1 9 7 6 9 0z" fill="#1e5ad0" />
            <path d="M9 5c0 3-4 5-4 9 0 2 1 4 3 4-1-3 1-5 3-7 1-2 0-4-2-6z" fill="#b8d8ff" />
          </TitleIcon>
          <TitleText>TradeStation 8.1 - STOX_FIB - SITO Indici - [Chart Analysis - GS:FTSEMIB  4 min  [MCEDB] SPMIB FUTURES]</TitleText>
          <WindowControls>
            <WindowControl $w={37} $first $drop={7}>
              <svg width="16" height="5"><rect width="16" height="5" fill="#fff" /></svg>
            </WindowControl>
            <WindowControl $w={35}>
              <svg width="20" height="20" viewBox="0 0 20 20">
                <path d="M7 2h11v12h-3M3 6h11v12H3z" fill="none" stroke="#e8eef4" strokeWidth="2" />
                <path d="M6 9h5v6H6z" fill="none" stroke="#e8eef4" strokeWidth="2" />
              </svg>
            </WindowControl>
            <WindowControl $w={64} $danger>
              <svg width="20" height="18" viewBox="0 0 20 18">
                <path d="M3 1l14 16M17 1L3 17" stroke="#fff" strokeWidth="4.5" />
              </svg>
            </WindowControl>
          </WindowControls>
        </TitleBar>

        <MenuBar>
          <MenuLogo viewBox="0 0 20 17">
            <rect width="20" height="17" fill="#101018" />
            <rect y="14" width="20" height="3" fill="#a01818" />
            <path d="M2 12l3-5 2 3 3-7 2 5 3-4 3 5" fill="none" stroke="#20c040" strokeWidth="1.4" />
          </MenuLogo>
          <MenuItem $w={37}>File</MenuItem>
          <MenuItem $w={40}>Edit</MenuItem>
          <MenuItem $w={46}>View</MenuItem>
          <MenuItem $w={50}>Insert</MenuItem>
          <MenuItem $w={62}>Format</MenuItem>
          <MenuItem $w={69}>Drawing</MenuItem>
          <MenuItem $w={69}>Window</MenuItem>
          <MenuItem $w={40}>Help</MenuItem>
          <MdiButtons>
            <MdiButton><Hbar /></MdiButton>
            <MdiButton><RestoreGlyph /></MdiButton>
            <MdiButton><CrossGlyph /></MdiButton>
          </MdiButtons>
        </MenuBar>

        <ToolBar>
          <Grip $r={5} />
          <Tools names={['page', 'open', 'saveAll', 'mail', 'folderUp']} />
          <Separator $r={4} />
          <Tools names={['preview', 'print']} />
          <Separator />
          <Tools names={['windowIn', 'windowColor', 'lock', 'dish', 'cubes']} />
          <Separator $l={5} $r={0} />
          <SymbolBox>Type a symbol/co<DropArrow /></SymbolBox>
          <ToolButton $w={18}><ScrollArrow $right /></ToolButton>
          <Spacer $w={8} />
          <Tool name="lensPage" />
          <Grip $l={18} $r={3} />
          <Tools names={['grayData', 'grayGrid', 'table']} />
          <Separator $l={6} $r={2} />
          <Tools names={['bars', 'updown', 'stacked']} />
          <Separator $l={6} $r={3} />
          <Tools names={['chartIn', 'chartOut']} />
          <Separator />
          <Tools names={['calendar', 'lensBars', 'blackBars', 'candleBlue', 'candleMix']} />
          <Separator />
          <Tools names={['squeeze', 'spread']} />
          <Separator $l={5} $r={2} />
          <Tools names={['zoomIn', 'zoomOut']} />
          <Separator $l={5} $r={3} />
          <Tools names={['pointer', 'chartText']} />
          <Separator $l={4} $r={2} />
          <Tools names={['hammer']} />
          <Separator $l={5} $r={2} />
          <Tools names={['addTable']} />
          <Separator $l={5} $r={2} />
          <Tools names={['note']} />
          <Grip $l={29} $r={2} />
          <Tools names={['fork', 'vLines', 'hLines', 'calc', 'arc', 'fan', 'retrace', 'speedV', 'angle', 'arrows', 'parallels', 'arch', 'pencil']} />
          <Separator $l={8} $r={3} />
          <Tools names={['curve', 'arrowDown', 'arrowUp', 'circle', 'square']} />
          <ToolButton><ToolText>abc</ToolText></ToolButton>
        </ToolBar>

        <ChartArea>
          <PriceChart />
          <MacdChart />
          <VeloChart />
          <TimeAxis />
          <FloatingControls>
            <FloatingButton><Hbar /></FloatingButton>
            <FloatingButton><RestoreGlyph /></FloatingButton>
            <FloatingButton><CrossGlyph /></FloatingButton>
          </FloatingControls>
        </ChartArea>

        <ScrollBar>
          <ScrollArrow />
          <ScrollEnd>
            <ScrollThumb><i /><i /><i /></ScrollThumb>
            <ScrollArrow $right />
          </ScrollEnd>
        </ScrollBar>

        <TabStrip>
          <TabNav>
            {NAV_GLYPHS.map((d) => (
              <TabNavButton key={d}>
                <svg viewBox="0 0 10 10"><path d={d} fill="#999" stroke="#999" /></svg>
              </TabNavButton>
            ))}
          </TabNav>
          {TABS.map(([label, w, active]) => (
            <Tab key={label} $w={w} $active={active}>{label}</Tab>
          ))}
        </TabStrip>

        <StatusBar>
          <HelpText>For Help, press F1</HelpText>
          {STATUS.map(([label, w, pad, color, bare]) => (
            <StatusCell key={label} $w={w} $pad={pad} $c={color} $bare={bare}>{label}</StatusCell>
          ))}
          <StatusCell $w={19} $pad={4}><Led /></StatusCell>
          <StatusCell $w={124} $pad={5}>07/03/2022 16:31</StatusCell>
        </StatusBar>
      </Screen>
    </>
  );
}
